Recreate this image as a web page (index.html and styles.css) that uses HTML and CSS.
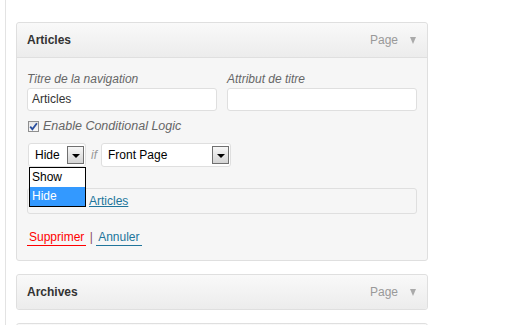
FILE: index.html
```html
<!DOCTYPE html>
<html>
<head>
<meta charset="utf-8">
<link rel="stylesheet" href="styles.css">
</head>
<body>
<div class="page">
  <div class="card">
    <div class="card-head">
      <span class="card-title">Articles</span>
      <span class="card-meta">Page <span class="tri"></span></span>
    </div>
    <div class="card-body">
      <div class="fields">
        <div class="field">
          <label class="lbl">Titre de la navigation</label>
          <div class="input">Articles</div>
        </div>
        <div class="field">
          <label class="lbl">Attribut de titre</label>
          <div class="input"></div>
        </div>
      </div>
      <div class="check-row">
        <span class="checkbox"><svg width="9" height="9" viewBox="0 0 9 9"><path d="M1.2 4.6 L3.4 7.2 L7.9 1.2" fill="none" stroke="#2a4f9e" stroke-width="1.8"/></svg></span>
        <span class="check-label">Enable Conditional Logic</span>
      </div>
      <div class="cond-row">
        <div class="select-wrap">
          <div class="select sel-small"><span class="sel-text">Hide</span><span class="sel-btn"><span class="sel-arrow"></span></span></div>
          <ul class="dropdown">
            <li>Show</li>
            <li class="active">Hide</li>
          </ul>
        </div>
        <span class="if">if</span>
        <div class="select sel-large"><span class="sel-text">Front Page</span><span class="sel-btn"><span class="sel-arrow"></span></span></div>
      </div>
      <div class="original"><a class="link">Articles</a></div>
      <div class="actions">
        <a class="act del">Supprimer</a> <span class="sep">|</span> <a class="act cancel">Annuler</a>
      </div>
    </div>
  </div>
  <div class="card">
    <div class="card-head closed">
      <span class="card-title">Archives</span>
      <span class="card-meta">Page <span class="tri"></span></span>
    </div>
  </div>
  <div class="card">
    <div class="card-head closed"></div>
  </div>
</div>
</body>
</html>
```
FILE: styles.css
```css
* { box-sizing: border-box; }
html, body { margin: 0; padding: 0; background: #fff; }
body {
  font-family: "Liberation Sans", Arial, sans-serif;
  font-size: 12px;
  color: #333;
  overflow: hidden;
  height: 325px;
}
.page {
  margin-left: 5px;
  border-left: 1px solid #e3e3e3;
  padding: 22px 0 0 10px;
  min-height: 325px;
}
.card {
  width: 412px;
  border: 1px solid #dfdfdf;
  border-radius: 3px;
  background: #f6f6f6;
  margin-bottom: 13px;
}
.card-head {
  height: 35px;
  border-bottom: 1px solid #dfdfdf;
  background: linear-gradient(#f9f9f9, #ececec);
  border-radius: 3px 3px 0 0;
  display: flex;
  align-items: center;
  justify-content: space-between;
  padding: 0 11px 0 10px;
}
.card-head.closed {
  height: 34px;
  border-bottom: none;
  border-radius: 3px;
}
.card-title {
  font-weight: bold;
  color: #333;
  font-size: 12px;
}
.card-meta {
  color: #999;
  display: flex;
  align-items: center;
  gap: 12px;
}
.tri {
  width: 0;
  height: 0;
  border-left: 3.5px solid transparent;
  border-right: 3.5px solid transparent;
  border-top: 7px solid #aaa;
  margin-top: 1px;
}
.card-body {
  padding: 13px 10px 14px 10px;
}
.fields {
  display: flex;
  gap: 10px;
}
.field { width: 190px; }
.lbl {
  display: block;
  font-style: italic;
  color: #666;
  line-height: 16px;
  margin-bottom: 1px;
}
.input {
  height: 23px;
  background: #fff;
  border: 1px solid #dfdfdf;
  border-radius: 3px;
  padding: 0 4px;
  line-height: 21px;
  color: #333;
}
.check-row {
  margin-top: 7px;
  height: 16px;
  display: flex;
  align-items: center;
  padding-left: 1px;
}
.checkbox {
  width: 11px;
  height: 11px;
  border: 1px solid #8f8f8f;
  background: linear-gradient(#e6e6e6, #f8f8f8);
  display: flex;
  align-items: center;
  justify-content: center;
  margin-right: 4px;
}
.checkbox svg { display: block; }
.check-label {
  font-style: italic;
  color: #666;
  font-size: 12.5px;
}
.cond-row {
  margin-top: 9px;
  display: flex;
  align-items: center;
  padding-left: 1px;
}
.select-wrap { position: relative; }
.select {
  height: 24px;
  background: #fff;
  border: 1px solid #dfdfdf;
  border-radius: 3px;
  display: flex;
  align-items: center;
  justify-content: space-between;
  padding: 0 1px 0 6px;
  color: #000;
}
.sel-small { width: 58px; }
.sel-large { width: 130px; padding-left: 6px; }
.sel-btn {
  width: 17px;
  height: 18px;
  border: 1px solid #707070;
  background: linear-gradient(#f7f7f7, #d4d4d4);
  display: flex;
  align-items: center;
  justify-content: center;
}
.sel-arrow {
  width: 0;
  height: 0;
  border-left: 4px solid transparent;
  border-right: 4px solid transparent;
  border-top: 4px solid #000;
  margin-top: 2px;
}
.if {
  font-style: italic;
  color: #999;
  margin: 0 4px 0 5px;
}
.dropdown {
  position: absolute;
  left: 1px;
  top: 24px;
  width: 57px;
  margin: 0;
  padding: 0;
  list-style: none;
  background: #fff;
  border: 1px solid #000;
  z-index: 2;
}
.dropdown li {
  height: 19px;
  line-height: 19px;
  padding-left: 2px;
  color: #000;
}
.dropdown li.active {
  background: #3399ff;
  color: #fff;
}
.original {
  margin-top: 21px;
  height: 26px;
  border: 1px solid #dfdfdf;
  border-radius: 3px;
  padding-left: 61px;
  line-height: 24px;
  color: #666;
}
.link {
  color: #21759b;
  text-decoration: underline;
}
.actions {
  margin-top: 16px;
  line-height: 14px;
}
.act {
  display: inline-block;
  padding: 0 2px 1px 2px;
  border-bottom: 1px solid;
  text-decoration: none;
}
.del { color: #f00; border-color: #f00; }
.cancel { color: #21759b; border-color: #21759b; }
.sep { color: #8b4a6b; }
```
